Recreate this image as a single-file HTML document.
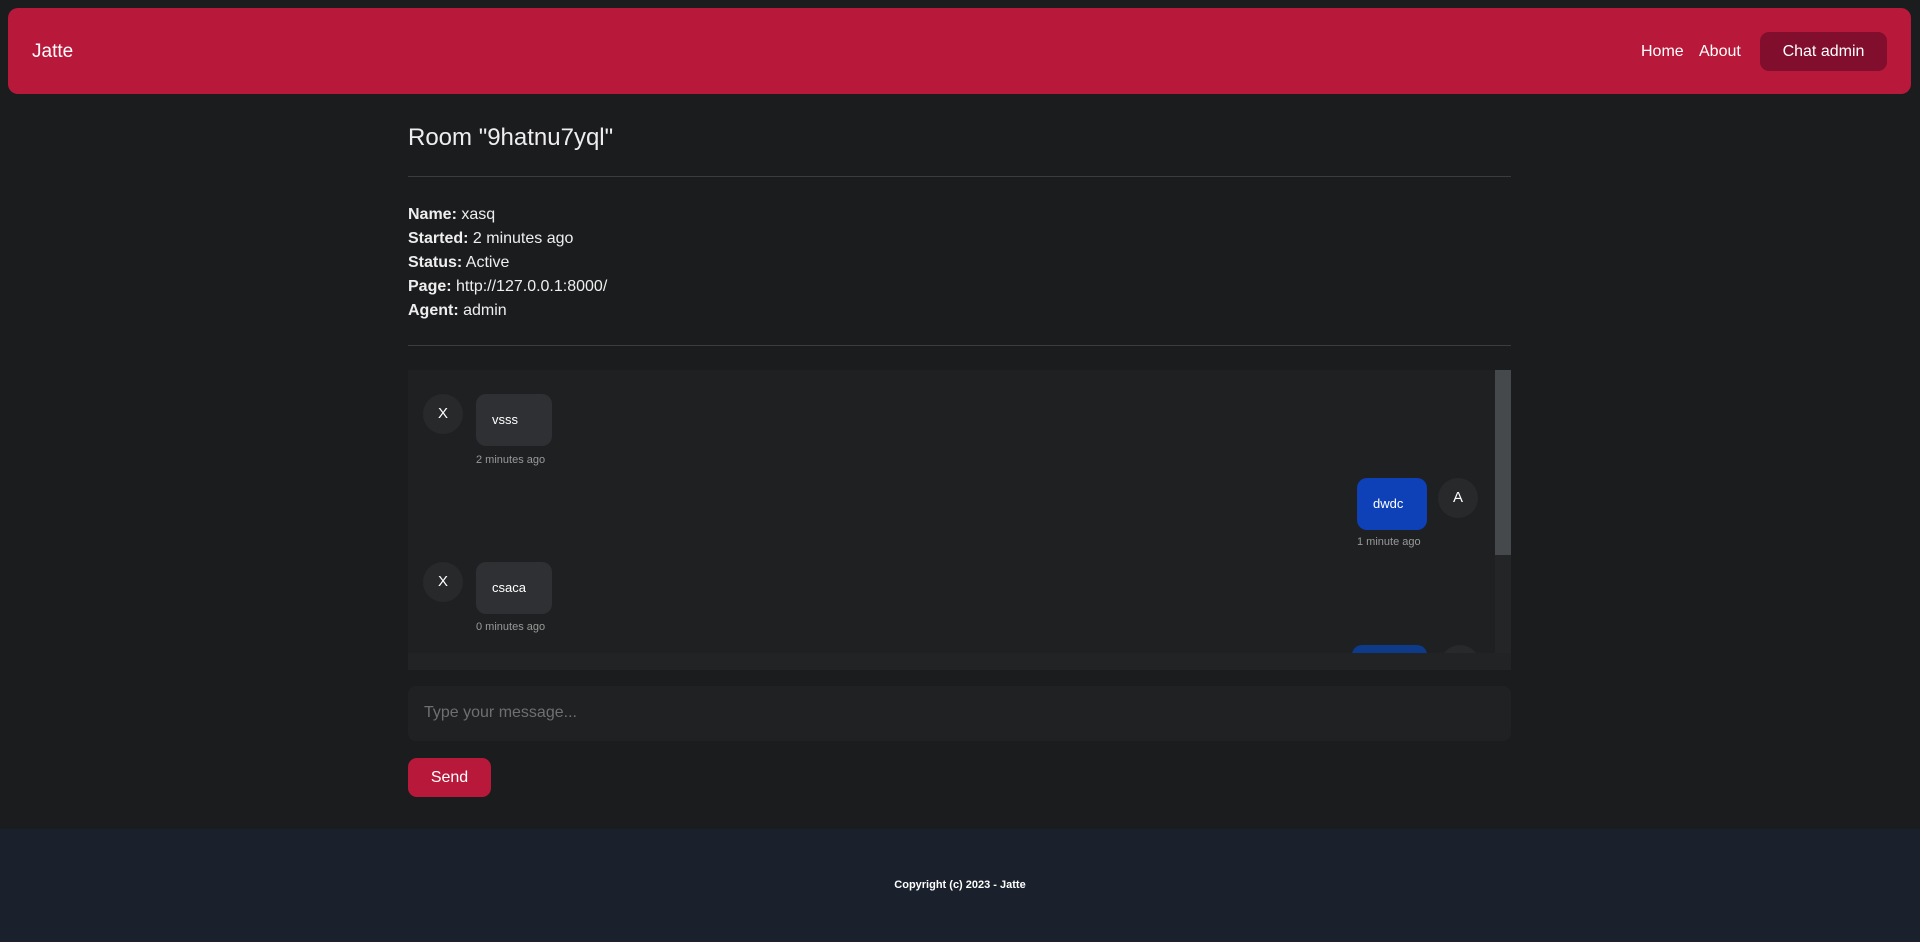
<!DOCTYPE html>
<html><head><meta charset="utf-8"><style>
*{box-sizing:border-box;margin:0;padding:0}
body{width:1920px;height:942px;background:#1b1c1e;font-family:"Liberation Sans",sans-serif;color:#e8e8e8;position:relative;overflow:hidden}
.nav{position:absolute;left:8px;top:8px;width:1903px;height:86px;background:#b8193b;border-radius:10px}
.brand{position:absolute;left:32px;top:41px;font-size:19px;color:#fff}
.nl{position:absolute;top:43px;font-size:16px;color:#fff}
.btn{position:absolute;left:1760px;top:32px;width:127px;height:39px;background:#810e2d;border-radius:9px;color:#fff;font-size:16px;text-align:center;line-height:39px}
.abs{position:absolute}
h1{position:absolute;left:408px;top:124px;font-size:24px;font-weight:normal;color:#eee}
.hr{position:absolute;left:408px;width:1103px;height:1px;background:#3a3c3f}
.info{position:absolute;left:408px;top:203px;font-size:16px;line-height:24px;color:#eee}
.chat{position:absolute;left:408px;top:370px;width:1103px;height:300px;background:#212325}
.view{position:absolute;left:0;top:0;width:1087px;height:283px;background:#1f2022;overflow:hidden}
.sb{position:absolute;left:1087px;top:0;width:16px;height:283px;background:#232526}
.thumb{position:absolute;left:1087px;top:0;width:16px;height:185px;background:#45494c}
.av{position:absolute;width:40px;height:40px;border-radius:50%;background:#27292b;color:#fff;font-size:15px;text-align:center;line-height:40px}
.bub{position:absolute;height:52px;border-radius:10px;color:#fff;font-size:13px;line-height:52px;padding-left:16px}
.t{position:absolute;font-size:11px;color:#999}
.inp{position:absolute;left:408px;top:686px;width:1103px;height:55px;background:#202123;border-radius:8px;font-size:16px;color:#6d6f72;padding:18px 16px}
.send{position:absolute;left:408px;top:758px;width:83px;height:39px;background:#b8193b;border-radius:9px;color:#fff;font-size:16px;text-align:center;line-height:39px}
.foot{position:absolute;left:0;top:829px;width:1920px;height:113px;background:#1a202c;text-align:center;font-size:11px;font-weight:bold;color:#fff;padding-top:50px}
</style></head><body>
<div class="nav"></div>
<div class="brand">Jatte</div>
<div class="nl" style="left:1641px">Home</div>
<div class="nl" style="left:1699px">About</div>
<div class="btn">Chat admin</div>
<h1>Room "9hatnu7yql"</h1>
<div class="hr" style="top:176px"></div>
<div class="info"><b>Name:</b> xasq<br><b>Started:</b> 2 minutes ago<br><b>Status:</b> Active<br><b>Page:</b> http://127.0.0.1:8000/<br><b>Agent:</b> admin</div>
<div class="hr" style="top:345px"></div>
<div class="chat">
 <div class="view">
  <div class="av" style="left:15px;top:24px">X</div>
  <div class="bub" style="left:68px;top:24px;width:76px;background:#2e3033">vsss</div>
  <div class="t" style="left:68px;top:84px">2 minutes ago</div>
  <div class="bub" style="left:949px;top:108px;width:70px;background:#0e40b8">dwdc</div>
  <div class="av" style="left:1030px;top:108px">A</div>
  <div class="t" style="left:949px;top:166px">1 minute ago</div>
  <div class="av" style="left:15px;top:192px">X</div>
  <div class="bub" style="left:68px;top:192px;width:76px;background:#2e3033">csaca</div>
  <div class="t" style="left:68px;top:251px">0 minutes ago</div>
  <div class="bub" style="left:944px;top:275px;width:75px;background:#0e3a8a"></div>
  <div class="av" style="left:1032px;top:275px"></div>
 </div>
 <div class="sb"></div><div class="thumb"></div>
</div>
<div class="inp">Type your message...</div>
<div class="send">Send</div>
<div class="foot">Copyright (c) 2023 - Jatte</div>
</body></html>
